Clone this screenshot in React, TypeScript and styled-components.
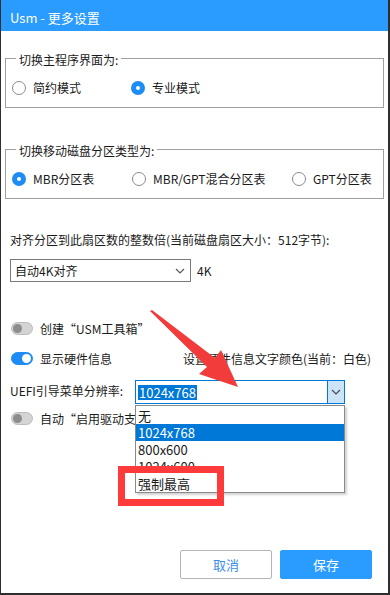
import React from "react";
import styled, { createGlobalStyle } from "styled-components";

const Global = createGlobalStyle`
  html, body { margin: 0; padding: 0; background: #fff; }
  body { font-family: "Noto Sans CJK SC", "Noto Sans", sans-serif; font-size: 12px; color: #1a1a1a; }
  * { box-sizing: border-box; }
`;

const Window = styled.div`
  position: relative;
  width: 390px;
  height: 595px;
  background: #fff;
  border-left: 1px solid #2e2e2e;
  border-right: 2px solid #2e2e2e;
  border-bottom: 2px solid #2e2e2e;
  display: flex;
  flex-direction: column;
  overflow: hidden;
`;

const TitleBar = styled.div`
  height: 31px;
  background: #2a9bff;
  color: #fff;
  font-size: 13px;
  display: flex;
  align-items: center;
  padding-left: 9px;
  padding-top: 3px;
  flex-shrink: 0;
`;

const Body = styled.div`
  display: flex;
  flex-direction: column;
  padding: 0 4px 0 4px;
  flex: 1;
`;

const Group = styled.fieldset<{ $mt: number }>`
  margin: ${(p) => p.$mt}px 0 0 0;
  padding: 14px 0 11px 6px;
  border: 1px solid #a0a0a0;
  min-width: 0;
`;

const Legend = styled.legend`
  padding: 0 3px;
  margin-left: 4px;
  line-height: 16px;
  height: 16px;
  font-size: 12px;
  transform: translateY(2px);
`;

const RadioRow = styled.div`
  display: flex;
  align-items: center;
  height: 16px;
`;

const RadioItem = styled.label<{ $w?: number }>`
  display: flex;
  align-items: center;
  gap: 7px;
  width: ${(p) => (p.$w ? `${p.$w}px` : "auto")};
  line-height: 16px;
  white-space: nowrap;
`;

const RadioDot = styled.span<{ $on?: boolean }>`
  width: 14px;
  height: 14px;
  border-radius: 50%;
  background: #fff;
  border: ${(p) => (p.$on ? "5px solid #1e8cf5" : "1.5px solid #8a8a8a")};
  flex-shrink: 0;
`;

const Line = styled.div<{ $mt: number }>`
  margin-top: ${(p) => p.$mt}px;
  padding-left: 5px;
  line-height: 18px;
  height: 18px;
  display: flex;
  align-items: center;
  white-space: nowrap;
`;

const SelectRow = styled.div`
  margin-top: 10px;
  padding-left: 5px;
  display: flex;
  align-items: center;
  gap: 6px;
`;

const Select = styled.div`
  width: 181px;
  height: 23px;
  border: 1px solid #7a7a7a;
  display: flex;
  align-items: center;
  justify-content: space-between;
  padding: 0 5px 0 4px;
`;

const ToggleRow = styled.div<{ $mt: number }>`
  margin-top: ${(p) => p.$mt}px;
  padding-left: 6px;
  height: 18px;
  display: flex;
  align-items: center;
  gap: 7px;
  white-space: nowrap;
`;

const Track = styled.span<{ $on?: boolean }>`
  width: 22px;
  height: 13px;
  border-radius: 7px;
  background: ${(p) => (p.$on ? "#1e8cf5" : "#d4d4d4")};
  border: 1px solid ${(p) => (p.$on ? "#1e8cf5" : "#bdbdbd")};
  display: flex;
  align-items: center;
  justify-content: ${(p) => (p.$on ? "flex-end" : "flex-start")};
  padding: 0 1px;
  flex-shrink: 0;
`;

const Knob = styled.span<{ $on?: boolean }>`
  width: 9px;
  height: 9px;
  border-radius: 50%;
  background: ${(p) => (p.$on ? "#fff" : "#8c8c8c")};
`;

const HwColor = styled.span`
  margin-left: auto;
  margin-right: 13px;
`;

const UefiRow = styled.div`
  margin-top: 13px;
  padding-left: 5px;
  display: flex;
  align-items: center;
  height: 24px;
  white-space: nowrap;
`;

const UefiLabel = styled.span`
  width: 125px;
  flex-shrink: 0;
  margin-top: -4px;
`;

const Combo = styled.div`
  position: relative;
  width: 210px;
  height: 24px;
  border: 1px solid #0078d7;
  display: flex;
  align-items: stretch;
`;

const ComboText = styled.div`
  flex: 1;
  display: flex;
  align-items: center;
  padding-left: 2px;
`;

const Selected = styled.span`
  background: #0078d7;
  color: #fff;
  font-size: 13px;
  line-height: 15px;
  padding: 0 1px;
`;

const ComboBtn = styled.div`
  width: 17px;
  background: #cce4f7;
  border-left: 1px solid #0078d7;
  display: flex;
  align-items: center;
  justify-content: center;
`;

const List = styled.div`
  position: absolute;
  top: 24px;
  left: -1px;
  width: 210px;
  height: 88px;
  background: #fff;
  border: 1px solid #8a8a8a;
  box-shadow: 2px 2px 2px rgba(0, 0, 0, 0.18);
  padding-top: 1px;
  z-index: 2;
`;

const Item = styled.div<{ $hl?: boolean }>`
  height: 17px;
  line-height: 17px;
  padding-left: 2px;
  font-size: 13px;
  background: ${(p) => (p.$hl ? "#0078d7" : "transparent")};
  color: ${(p) => (p.$hl ? "#fff" : "#1a1a1a")};
`;

const Buttons = styled.div`
  margin-top: auto;
  margin-bottom: 14px;
  display: flex;
  justify-content: flex-end;
  gap: 8px;
  padding-right: 12px;
`;

const Btn = styled.button<{ $primary?: boolean }>`
  width: 92px;
  height: 29px;
  border-radius: 2px;
  font-family: inherit;
  font-size: 13px;
  border: 1px solid ${(p) => (p.$primary ? "#2a9bff" : "#b5b5b5")};
  background: ${(p) => (p.$primary ? "#2a9bff" : "#fff")};
  color: ${(p) => (p.$primary ? "#fff" : "#3d8ee8")};
`;

const Annot = styled.svg`
  position: absolute;
  left: 0;
  top: 0;
  pointer-events: none;
  z-index: 3;
`;

const RedBox = styled.div`
  position: absolute;
  left: 117px;
  top: 466px;
  width: 106px;
  height: 40px;
  border: 7px solid #ff3a3a;
  z-index: 3;
`;

const Chevron = ({ color }: { color: string }) => (
  <svg width="10" height="6" viewBox="0 0 10 6">
    <polyline points="1,1 5,5 9,1" fill="none" stroke={color} strokeWidth="1.1" />
  </svg>
);

export default function App() {
  return (
    <>
      <Global />
      <Window>
        <TitleBar>Usm - 更多设置</TitleBar>
        <Body>
          <Group $mt={19}>
            <Legend>切换主程序界面为:</Legend>
            <RadioRow>
              <RadioItem $w={119}>
                <RadioDot />
                简约模式
              </RadioItem>
              <RadioItem>
                <RadioDot $on />
                专业模式
              </RadioItem>
            </RadioRow>
          </Group>
          <Group $mt={33}>
            <Legend>切换移动磁盘分区类型为:</Legend>
            <RadioRow>
              <RadioItem $w={120}>
                <RadioDot $on />
                MBR分区表
              </RadioItem>
              <RadioItem $w={160}>
                <RadioDot />
                MBR/GPT混合分区表
              </RadioItem>
              <RadioItem>
                <RadioDot />
                GPT分区表
              </RadioItem>
            </RadioRow>
          </Group>
          <Line $mt={32}>对齐分区到此扇区数的整数倍(当前磁盘扇区大小：512字节):</Line>
          <SelectRow>
            <Select>
              <span>自动4K对齐</span>
              <Chevron color="#555" />
            </Select>
            <span>4K</span>
          </SelectRow>
          <ToggleRow $mt={37}>
            <Track>
              <Knob />
            </Track>
            创建“USM工具箱”
          </ToggleRow>
          <ToggleRow $mt={12}>
            <Track $on>
              <Knob $on />
            </Track>
            显示硬件信息
            <HwColor>设置硬件信息文字颜色(当前：白色)</HwColor>
          </ToggleRow>
          <UefiRow>
            <UefiLabel>UEFI引导菜单分辨率:</UefiLabel>
            <Combo>
              <ComboText>
                <Selected>1024x768</Selected>
              </ComboText>
              <ComboBtn>
                <Chevron color="#444" />
              </ComboBtn>
              <List>
                <Item>无</Item>
                <Item $hl>1024x768</Item>
                <Item>800x600</Item>
                <Item>1024x600</Item>
                <Item>强制最高</Item>
              </List>
            </Combo>
          </UefiRow>
          <ToggleRow $mt={5}>
            <Track>
              <Knob />
            </Track>
            自动“启用驱动支持”
          </ToggleRow>
          <Buttons>
            <Btn>取消</Btn>
            <Btn $primary>保存</Btn>
          </Buttons>
        </Body>
        <RedBox />
        <Annot width="390" height="595" viewBox="0 0 390 595">
          <polygon
            points="149,311 151,310 214,358 220,350 237,387 198,374 206,367"
            fill="#f23b3b"
          />
        </Annot>
      </Window>
    </>
  );
}
